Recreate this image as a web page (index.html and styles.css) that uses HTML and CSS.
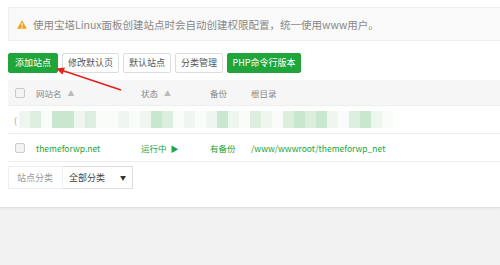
FILE: index.html
```html
<!DOCTYPE html>
<html lang="zh-CN">
<head>
  <meta charset="UTF-8" />
  <title>网站管理</title>
  <link rel="stylesheet" href="styles.css">
</head>
<body>

  <div class="page">

    <!-- Notice -->
    <div class="notice">
      <svg class="warn" width="10" height="9" viewBox="0 0 10 9">
        <path d="M5 0.3 L9.8 8.7 L0.2 8.7 Z" fill="#f39c12"/>
        <rect x="4.4" y="3" width="1.2" height="3.2" fill="#fff"/>
        <rect x="4.4" y="6.9" width="1.2" height="1.1" fill="#fff"/>
      </svg>
      <span>使用宝塔Linux面板创建站点时会自动创建权限配置，统一使用www用户。</span>
    </div>

    <!-- Toolbar -->
    <div class="toolbar">
      <button class="btn btn-green w49">添加站点</button>
      <button class="btn w57">修改默认页</button>
      <button class="btn w48">默认站点</button>
      <button class="btn w48">分类管理</button>
      <button class="btn btn-green w74">PHP命令行版本</button>
    </div>

    <!-- Site table -->
    <div class="table">
      <div class="row head">
        <div class="c-check"><span class="box"></span></div>
        <div class="c-name">网站名 <span class="sort">▲</span></div>
        <div class="c-state">状态 <span class="sort">▲</span></div>
        <div class="c-bak">备份</div>
        <div class="c-path">根目录</div>
      </div>
      <div class="row blur">
        <span class="paren">(</span>
        <div class="mosaic">
          <i class="m1"></i><i class="m2"></i><i class="m0"></i><i class="m3"></i><i class="m3"></i><i class="m1"></i><i class="m2"></i><i class="m0"></i>
          <i class="m0"></i><i class="m1"></i><i class="m0"></i><i class="m1"></i><i class="m3"></i><i class="m2"></i><i class="m0"></i><i class="m1"></i>
          <i class="m0"></i><i class="m1"></i><i class="m3"></i><i class="m1"></i><i class="m0"></i><i class="m2"></i><i class="m1"></i><i class="m0"></i>
          <i class="m2"></i><i class="m3"></i><i class="m2"></i><i class="m3"></i><i class="m1"></i><i class="m0"></i><i class="m2"></i><i class="m3"></i>
          <i class="m1"></i><i class="m0"></i>
        </div>
      </div>
      <div class="row">
        <div class="c-check"><span class="box"></span></div>
        <div class="c-name green">themeforwp.net</div>
        <div class="c-state green">运行中 <span class="play">▶</span></div>
        <div class="c-bak green">有备份</div>
        <div class="c-path green">/www/wwwroot/themeforwp_net</div>
      </div>
    </div>

    <!-- Category filter -->
    <div class="filter">
      <span class="filter-label">站点分类</span>
      <span class="filter-select">全部分类 <span class="caret">▼</span></span>
    </div>

    <!-- Annotation arrow -->
    <svg class="arrow" width="80" height="40" viewBox="0 0 80 40">
      <line x1="69" y1="29" x2="9" y2="9" stroke="#e8201e" stroke-width="1.6"/>
      <path d="M4 7.5 L13 6.5 L10.5 13.5 Z" fill="#e8201e"/>
    </svg>

  </div>

  <div class="footer"></div>

</body>
</html>
```

FILE: styles.css
```css
/* General page layout and font */
body {
  margin: 0;
  padding: 0;
  font-family: "Noto Sans CJK SC", "Liberation Sans", sans-serif;
  font-size: 8.5px;
  color: #666;
  background-color: #f2f2f2;
}

.page {
  position: relative;
  height: 208px;
  padding-top: 7px;
  box-sizing: border-box;
  background-color: #fff;
  border-bottom: 1px solid #e0e0e0;
  box-shadow: 0 1px 2px rgba(0,0,0,0.05);
}

/* Notice box */
.notice {
  margin-left: 8px;
  height: 32px;
  display: flex;
  align-items: center;
  background-color: #f9f9f9;
  border: 1px solid #efefef;
  border-right: none;
  color: #888;
  font-size: 10.5px;
}

.notice .warn {
  margin: 0 6px 0 8px;
}

/* Buttons */
.toolbar {
  display: flex;
  gap: 4px;
  margin: 12px 0 0 8px;
}

.btn {
  height: 20px;
  padding: 0;
  font-family: inherit;
  font-size: 9px;
  line-height: 18px;
  color: #555;
  background-color: #fff;
  border: 1px solid #ddd;
  border-radius: 2px;
}

.btn-green {
  background-color: #20a53a;
  border-color: #20a53a;
  color: #fff;
}

.w49 { width: 50px; }
.w57 { width: 57px; }
.w48 { width: 48px; }
.w74 { width: 74px; }

/* Table */
.table {
  margin: 7px 0 0 8px;
  border-bottom: 1px solid #eee;
}

.row {
  display: flex;
  align-items: center;
  height: 27px;
  border-top: 1px solid #eee;
}

.row.head {
  height: 25px;
  border-top: none;
  background-color: #f6f6f6;
  color: #888;
}

.c-check { width: 28px; padding-left: 7px; box-sizing: border-box; }
.c-name { width: 105px; }
.c-state { width: 69px; }
.c-bak { width: 41px; }
.c-path { flex: 1; }

.box {
  display: block;
  width: 8px;
  height: 8px;
  border: 1px solid #ccc;
  border-radius: 2px;
  background-color: #f4f4f4;
}

.sort {
  font-size: 7px;
  color: #bbb;
  margin-left: 4px;
  vertical-align: 1px;
}

.green {
  color: #20a53a;
}

.play {
  font-size: 8px;
  margin-left: 2px;
}

/* Blurred row */
.row.blur {
  height: 27px;
  position: relative;
}

.paren {
  color: #999;
  margin-left: 6px;
}

.mosaic {
  display: flex;
  margin-left: 2px;
  height: 17px;
}

.mosaic i {
  display: block;
  width: 11px;
  height: 17px;
}

.m0 { background-color: #fafcfa; }
.m1 { background-color: #eef6ef; }
.m2 { background-color: #dcefdf; }
.m3 { background-color: #c9e7cf; }

/* Filter */
.filter {
  display: flex;
  margin: 4px 0 0 8px;
  height: 23px;
  font-size: 9px;
}

.filter-label {
  width: 55px;
  border: 1px solid #eee;
  box-sizing: border-box;
  line-height: 21px;
  padding-left: 8px;
  color: #999;
}

.filter-select {
  width: 70px;
  border: 1px solid #ddd;
  border-left: none;
  box-sizing: border-box;
  line-height: 21px;
  padding-left: 6px;
  color: #444;
  position: relative;
}

.caret {
  position: absolute;
  right: 6px;
  top: 0;
  font-size: 6px;
  color: #333;
}

/* Red annotation arrow */
.arrow {
  position: absolute;
  left: 52px;
  top: 61px;
}

.footer {
  height: 57px;
}
```
